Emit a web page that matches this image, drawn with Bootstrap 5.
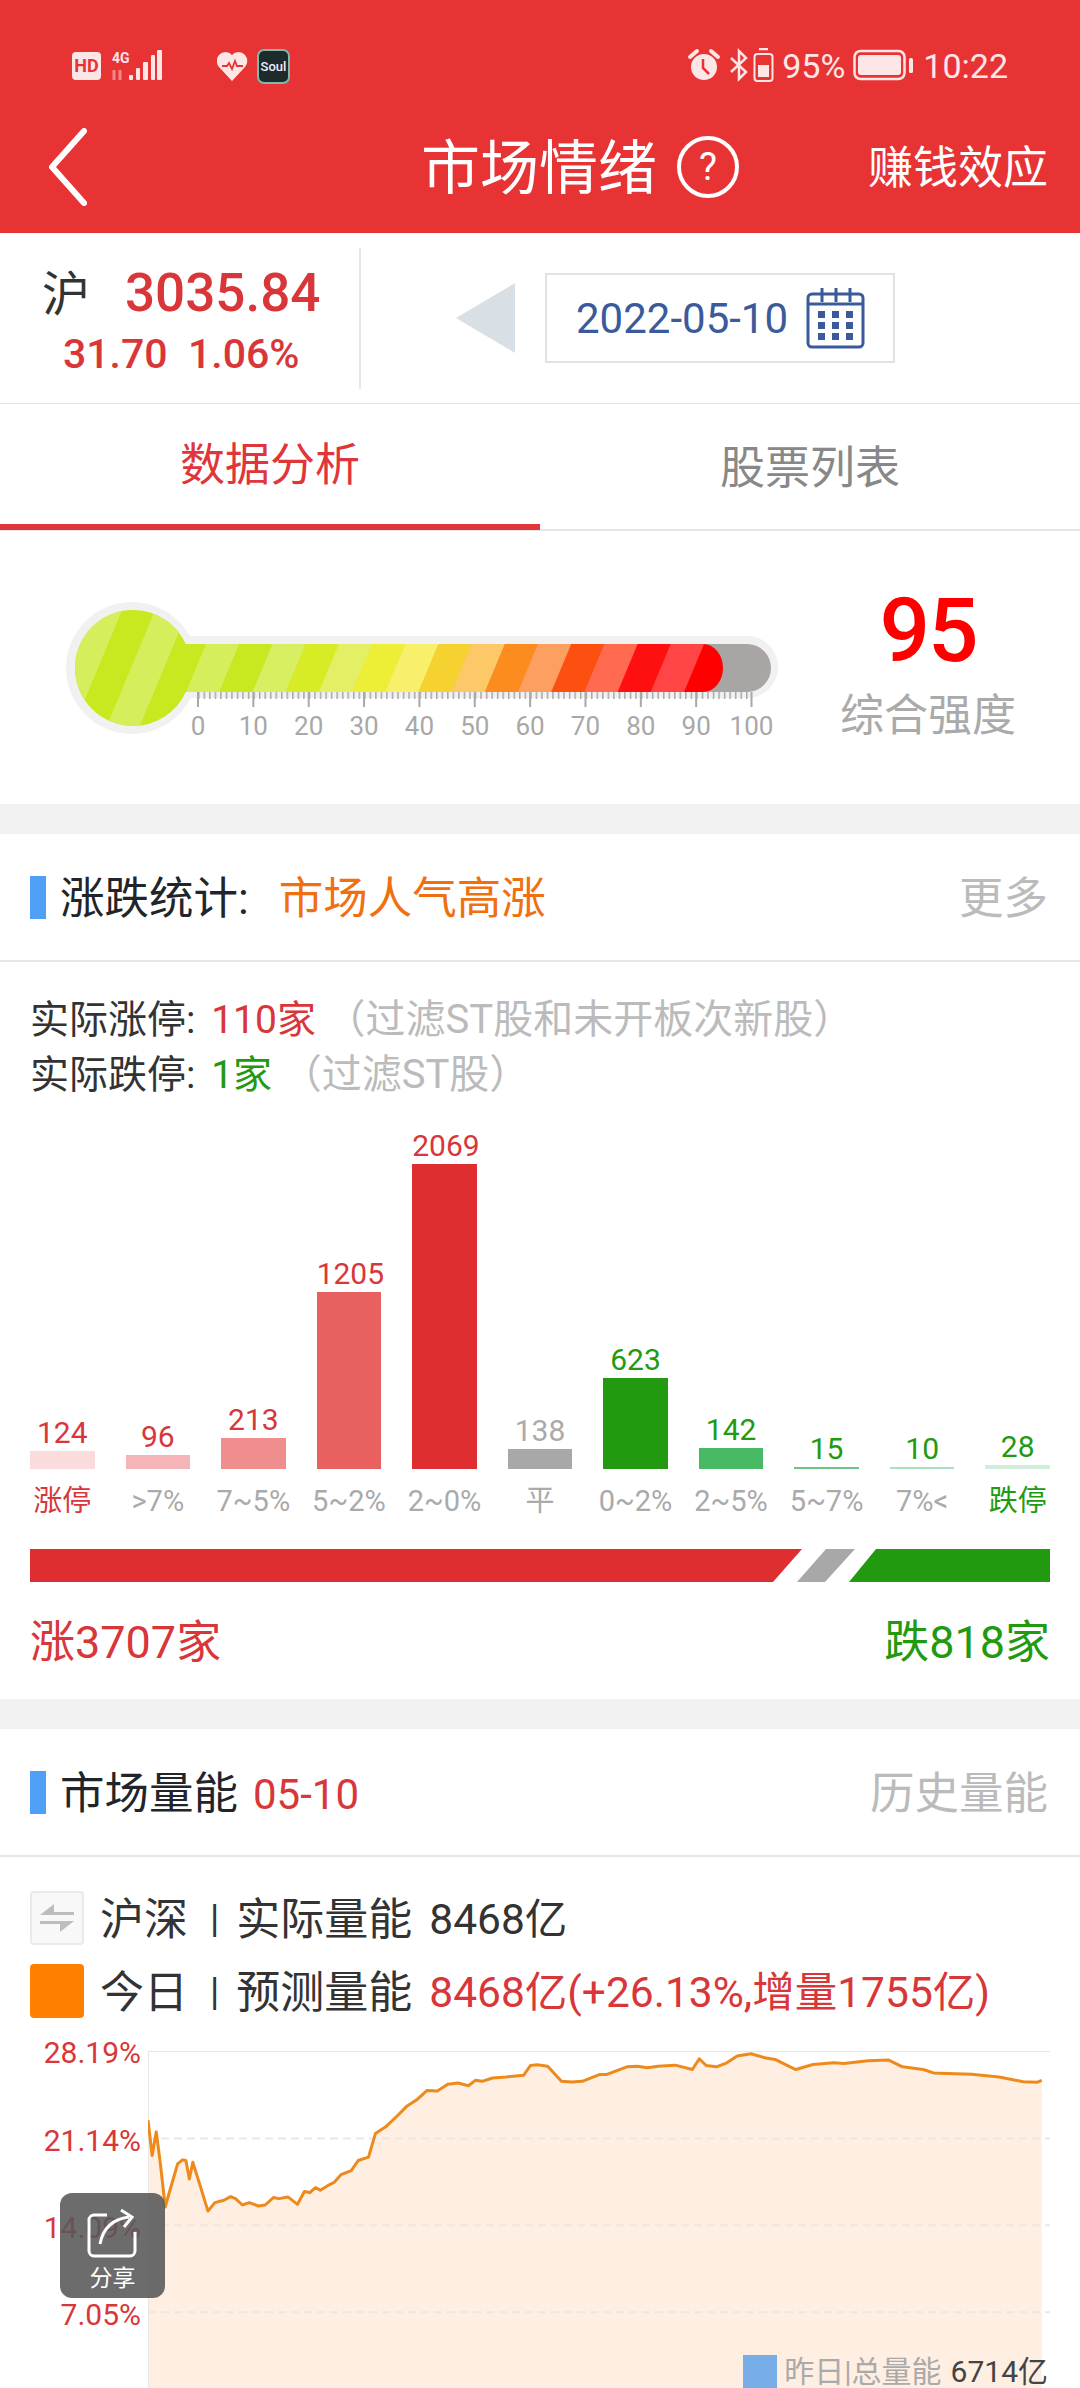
<!DOCTYPE html>
<html lang="zh-CN">
<head>
<meta charset="UTF-8">
<meta name="viewport" content="width=device-width, initial-scale=1.0">
<title>市场情绪</title>
<link href="https://cdn.jsdelivr.net/npm/bootstrap@5.3.0/dist/css/bootstrap.min.css" rel="stylesheet">
<style>
  html, body { margin: 0; }
  body {
    width: 1080px; height: 2388px; overflow: hidden; position: relative; background: #fff; color: #333;
    font-family: Roboto, "Noto Sans CJK SC", sans-serif;
  }
  .c-red { color: #d93639; }
  .c-green { color: #229a10; }
  .c-gray { color: #aaa; }
  .c-pale { color: #bbb; }

  .app-head { background: #e83335; color: #fff; height: 233px; }
  .status-bar { height: 100px; padding: 48px 72px 0; color: #fde6e6; }
  .status-apps { margin-left: 53px; }
  .status-txt { font-size: 34px; line-height: 36px; }
  .nav-bar { height: 133px; padding: 0 32px 0 48px; }
  .page-title { font-size: 59px; line-height: 70px; margin-left: 334px; margin-right: 20px; padding-top: 4px; }
  .head-link { font-size: 45px; line-height: 60px; padding-top: 4px; }

  .index-row { height: 170px; }
  .index-left { width: 361px; height: 141px; border-right: 2px solid #e8e8e8; padding-top: 13px; }
  .index-name { font-size: 48px; line-height: 60px; color: #333; margin-left: 42px; width: 83px; padding-top: 4px; }
  .index-price { font-size: 53px; line-height: 60px; font-weight: 500; }
  .index-chg { font-size: 41px; line-height: 50px; font-weight: 500; margin: 4px 0 0 63px; }
  .arrow-left { width: 0; height: 0; border-top: 35px solid transparent; border-bottom: 35px solid transparent; border-right: 59px solid #d8dfe5; margin: 0 30px 0 95px; }
  .date-box { width: 350px; height: 90px; border: 2px solid #e2e2e2; padding-left: 29px; color: #3a5a9c; font-size: 42px; }
  .cal-icon { margin-left: 18px; }

  .tab-row { height: 128px; border-bottom: 2px solid #e6e6e6; }
  .tab-item { height: 126px; font-size: 45px; color: #888; padding-top: 4px; }
  .tab-item.on { color: #e0353a; border-bottom: 6px solid #e0353a; }

  .thermo-wrap { height: 273px; }
  .thermo-side { width: 256px; text-align: center; }
  .thermo-num { font-size: 89px; line-height: 100px; font-weight: 500; color: #f00; margin-top: 50px; letter-spacing: -2px; }
  .thermo-lbl { font-size: 44px; line-height: 60px; color: #aaa; padding-top: 5px; }

  .band { height: 30px; background: #f2f2f2; }
  .sec-head { height: 128px; border-bottom: 2px solid #e6e6e6; padding: 0 32px 0 30px; font-size: 44.5px; }
  .sec-head > span:not(.sec-mark) { padding-top: 4px; }
  .sec-mark { width: 16px; height: 43px; background: #4e9ff5; margin-right: 14px; }
  .sec-orange { color: #f07010; margin-left: 30px; }
  .sec-date { font-size: 42px; margin-left: 15px; }

  .stat-body { padding: 30px 30px 26px; }
  .stat-line { font-size: 39px; line-height: 55px; height: 55px; color: #333; white-space: nowrap; }
  .stat-num { margin-left: 6px; }
  .stat-note { font-size: 40px; }
  .bars { margin-top: 26px; }
  .bar-col { width: 64.5px; }
  .bar-val { font-size: 30px; line-height: 36px; white-space: nowrap; text-align: center; }
  .bar-lbl { font-size: 29px; line-height: 64px; height: 64px; white-space: nowrap; text-align: center; margin: 0 -12px; }
  .ratio-bar { display: block; margin-top: 16px; }
  .totals { font-size: 45px; line-height: 60px; margin-top: 31px; }

  .legend-wrap { padding: 34px 30px 0; }
  .legend-row { height: 54px; margin-bottom: 19px; font-size: 44px; color: #333; white-space: nowrap; }
  .legend-row:last-child { margin-bottom: 0; }
  .legend-row > span:not(.legend-box) { padding-top: 3px; }
  .legend-box { width: 54px; height: 54px; border-radius: 4px; margin-right: 16px; }
  .legend-box.flat { background: #f8f8f8; border: 2px solid #eaeaea; }
  .legend-box.orange { background: #ff7f00; }
  .legend-sep { margin: 0 17px 0 22px; font-size: 38px; }
  .legend-val { margin-left: 17px; font-size: 42.5px; }

  .vol-chart { padding-left: 30px; }
  .y-axis { width: 111px; text-align: right; font-size: 30px; color: #d93639; }
  .y-axis div { line-height: 87px; height: 87px; }
  .y-axis div:first-child { line-height: 70px; height: 79px; }
  .plot { display: block; margin: 33px 0 0 7px; }
  .plot-legend { position: absolute; right: 32px; bottom: 0; height: 33px; font-size: 30px; line-height: 33px; color: #aaa; }
  .plot-legend i { display: block; width: 34px; height: 33px; background: #78aee8; margin-right: 7px; }
  .plot-legend b { font-weight: 400; color: #444; margin-left: 9px; }

  .share-btn { position: absolute; left: 60px; top: 2193px; width: 105px; height: 105px; border-radius: 12px; background: rgba(88,88,88,.88); color: #fff; font-size: 23px; line-height: 26px; padding-top: 15px; }
</style>
</head>
<body>

<div class="app-head">
  <div class="status-bar d-flex align-items-start">
    <svg width="92" height="34" viewBox="72 48 92 34">
      <rect x="72" y="52" width="29" height="28" rx="4" fill="#fde6e6"/>
      <text x="86.5" y="72" text-anchor="middle" font-size="18" font-weight="700" fill="#e83335" font-family="Roboto">HD</text>
      <text x="112" y="63" font-size="14" font-weight="700" fill="#fde6e6" font-family="Roboto">4G</text>
      <path d="M114 70v10M120 80v-10" stroke="#f08a8a" stroke-width="3" fill="none"/>
      <g fill="#fde6e6">
        <rect x="129" y="75" width="4" height="5" rx="1"/>
        <rect x="136" y="68" width="4" height="12" rx="1"/>
        <rect x="143" y="62" width="5" height="18" rx="1"/>
        <rect x="151" y="55" width="4" height="25" rx="1"/>
        <rect x="157" y="50" width="5" height="30" rx="1"/>
      </g>
    </svg>
    <svg width="73" height="36" viewBox="215 48 73 36" class="status-apps">
      <path d="M230 81l-13-14a9 9 0 0 1 0-12 8.500 8.500 0 0 1 13 0 8.500 8.500 0 0 1 13 0 9 9 0 0 1 0 12z" fill="#fde6e6"/>
      <path d="M220 66h5l2-3 3 6 3-8 2 5h6" fill="none" stroke="#e83335" stroke-width="1.800"/>
      <rect x="256" y="50" width="31" height="33" rx="6" fill="#1f2b2b" stroke="#7fb8ae" stroke-width="2"/>
      <text x="271.500" y="71" text-anchor="middle" font-size="13" font-weight="500" fill="#eef" font-family="Roboto">Soul</text>
    </svg>
    <div class="d-flex align-items-start ms-auto">
      <svg width="34" height="34" viewBox="0 0 34 34" class="me-1">
        <circle cx="17" cy="19" r="13" fill="#fde6e6"/>
        <path d="M3 9l7-6M31 9l-7-6" stroke="#fde6e6" stroke-width="4" stroke-linecap="round"/>
        <path d="M16 11v9l6 6" fill="none" stroke="#e83335" stroke-width="2.500"/>
      </svg>
      <svg width="20" height="34" viewBox="0 0 20 34" class="ms-1">
        <path d="M2 10l15 14-7 7V3l7 7L2 24" fill="none" stroke="#fde6e6" stroke-width="2.500"/>
      </svg>
      <svg width="21" height="34" viewBox="0 0 21 34" class="ms-1 me-2">
        <path d="M6 1h9" stroke="#fde6e6" stroke-width="2.500"/>
        <rect x="1.500" y="6" width="18" height="27" rx="3" fill="none" stroke="#fde6e6" stroke-width="2"/>
        <rect x="5" y="17" width="11" height="12" fill="#fde6e6"/>
      </svg>
      <span class="status-txt">95%</span>
      <svg width="62" height="34" viewBox="0 0 62 34" class="ms-2 me-2">
        <rect x="1.500" y="3" width="50" height="28" rx="6" fill="none" stroke="#fde6e6" stroke-width="2.500"/>
        <rect x="5" y="7" width="43" height="20" rx="3" fill="#fde6e6"/>
        <rect x="56" y="10" width="4" height="15" rx="1.500" fill="#fde6e6"/>
      </svg>
      <span class="status-txt">10:22</span>
    </div>
  </div>
  <div class="nav-bar d-flex align-items-center">
    <svg width="39" height="78" viewBox="0 0 39 78"><path d="M36 3L4 39l32 36" fill="none" stroke="#fff" stroke-width="6" stroke-linecap="round" stroke-linejoin="round"/></svg>
    <span class="page-title">市场情绪</span>
    <svg width="62" height="62" viewBox="0 0 62 62">
      <circle cx="31" cy="31" r="29" fill="none" stroke="#fff" stroke-width="4"/>
      <text x="31" y="44" text-anchor="middle" font-size="38" fill="#fff" font-family="Roboto">?</text>
    </svg>
    <span class="head-link ms-auto">赚钱效应</span>
  </div>
</div>

<div class="index-row d-flex align-items-center">
  <div class="index-left">
    <div class="d-flex align-items-center">
      <span class="index-name">沪</span>
      <span class="index-price c-red">3035.84</span>
    </div>
    <div class="index-chg c-red">31.70&nbsp; 1.06%</div>
  </div>
  <div class="arrow-left"></div>
  <div class="date-box d-flex align-items-center">
    <span>2022-05-10</span>
    <svg width="59" height="62" viewBox="0 0 59 62" class="cal-icon">
      <rect x="2" y="7" width="55" height="53" rx="4" fill="none" stroke="#3a5a9c" stroke-width="3"/>
      <path d="M2 17h55" stroke="#3a5a9c" stroke-width="3"/>
      <path d="M16 1v14M30 1v14M44 1v14" stroke="#3a5a9c" stroke-width="3"/>
      <g fill="#3a5a9c">
        <rect x="12" y="24" width="7" height="7"/><rect x="26" y="24" width="7" height="7"/><rect x="40" y="24" width="7" height="7"/>
        <rect x="12" y="35" width="7" height="7"/><rect x="26" y="35" width="7" height="7"/><rect x="40" y="35" width="7" height="7"/>
        <rect x="12" y="46" width="7" height="7"/><rect x="26" y="46" width="7" height="7"/><rect x="40" y="46" width="7" height="7"/>
      </g>
    </svg>
  </div>
</div>

<div class="row g-0 tab-row border-top">
  <div class="col-6 tab-item on d-flex align-items-center justify-content-center">数据分析</div>
  <div class="col-6 tab-item d-flex align-items-center justify-content-center">股票列表</div>
</div>

<div class="thermo-wrap d-flex">
  <svg width="800" height="273" viewBox="0 531 800 273">
    <defs>
      <clipPath id="fillClip">
        <circle cx="133" cy="668" r="58"/>
        <path d="M150 644H703a20 24 0 0 1 0 48H150z"/>
      </clipPath>
      <pattern id="minorTicks" x="198" y="692" width="5.535" height="7" patternUnits="userSpaceOnUse">
        <rect width="1.500" height="7" fill="#a8a8a8"/>
      </pattern>
    </defs>
    <circle cx="132" cy="668" r="66" fill="#f1f1f1"/>
    <rect x="150" y="636" width="628" height="62" rx="31" fill="#f1f1f1"/>
    <path d="M150 644H747a24 24 0 0 1 0 48H150z" fill="#a9a5a5"/>
    <g clip-path="url(#fillClip)">
      <rect x="60" y="600" width="150" height="140" fill="#c8e820"/>
      <g id="stripes"></g>
    </g>
    <rect x="198" y="692" width="554" height="7" fill="url(#minorTicks)"/>
    <g id="scale" font-size="26" fill="#a8a8a8" font-family="Roboto" text-anchor="middle"></g>
  </svg>
  <div class="thermo-side d-flex flex-column align-items-center">
    <div class="thermo-num">95</div>
    <div class="thermo-lbl">综合强度</div>
  </div>
</div>

<div class="band"></div>

<div class="sec-head d-flex align-items-center">
  <span class="sec-mark"></span>
  <span class="text-dark">涨跌统计:</span>
  <span class="sec-orange">市场人气高涨</span>
  <span class="c-pale ms-auto">更多</span>
</div>

<div class="stat-body">
  <div class="stat-line">实际涨停: <span class="c-red stat-num">110家</span> <span class="c-pale stat-note">（过滤ST股和未开板次新股）</span></div>
  <div class="stat-line">实际跌停: <span class="c-green stat-num">1家</span> <span class="c-pale stat-note">（过滤ST股）</span></div>

  <div class="bars d-flex justify-content-between align-items-end">
    <div class="bar-col"><div class="bar-val c-red">124</div><div style="height:18px;background:#fadcdc"></div><div class="bar-lbl c-red">涨停</div></div>
    <div class="bar-col"><div class="bar-val c-red">96</div><div style="height:14px;background:#f5b5b8"></div><div class="bar-lbl c-gray">&gt;7%</div></div>
    <div class="bar-col"><div class="bar-val c-red">213</div><div style="height:31px;background:#f08d8d"></div><div class="bar-lbl c-gray">7~5%</div></div>
    <div class="bar-col"><div class="bar-val c-red">1205</div><div style="height:177px;background:#e96060"></div><div class="bar-lbl c-gray">5~2%</div></div>
    <div class="bar-col"><div class="bar-val c-red">2069</div><div style="height:305px;background:#df2e30"></div><div class="bar-lbl c-gray">2~0%</div></div>
    <div class="bar-col"><div class="bar-val c-gray">138</div><div style="height:20px;background:#a8a8a8"></div><div class="bar-lbl c-gray">平</div></div>
    <div class="bar-col"><div class="bar-val c-green">623</div><div style="height:91px;background:#229a10"></div><div class="bar-lbl c-gray">0~2%</div></div>
    <div class="bar-col"><div class="bar-val c-green">142</div><div style="height:21px;background:#48b964"></div><div class="bar-lbl c-gray">2~5%</div></div>
    <div class="bar-col"><div class="bar-val c-green">15</div><div style="height:2px;background:#6cc48a"></div><div class="bar-lbl c-gray">5~7%</div></div>
    <div class="bar-col"><div class="bar-val c-green">10</div><div style="height:2px;background:#a8dfc0"></div><div class="bar-lbl c-gray">7%&lt;</div></div>
    <div class="bar-col"><div class="bar-val c-green">28</div><div style="height:4px;background:#cfeeda"></div><div class="bar-lbl c-green">跌停</div></div>
  </div>

  <svg class="ratio-bar" width="1020" height="33" viewBox="0 0 1020 33">
    <polygon points="0,0 772,0 743,33 0,33" fill="#df2e30"/>
    <polygon points="796,0 825,0 795,33 767,33" fill="#a8a8a8"/>
    <polygon points="846,0 1020,0 1020,33 819,33" fill="#229a10"/>
  </svg>

  <div class="totals d-flex justify-content-between">
    <span class="c-red">涨3707家</span>
    <span class="c-green">跌818家</span>
  </div>
</div>

<div class="band"></div>

<div class="sec-head d-flex align-items-center">
  <span class="sec-mark"></span>
  <span class="text-dark">市场量能</span>
  <span class="c-red sec-date">05-10</span>
  <span class="c-pale ms-auto">历史量能</span>
</div>

<div class="legend-wrap">
  <div class="legend-row d-flex align-items-center">
    <span class="legend-box flat d-flex align-items-center justify-content-center">
      <svg width="38" height="32" viewBox="0 0 38 32"><path d="M2 13L16 2v8h20v3zM36 19L22 30v-8H2v-3z" fill="#bdbdbd"/></svg>
    </span>
    <span>沪深</span><span class="legend-sep">|</span><span>实际量能</span><span class="legend-val">8468亿</span>
  </div>
  <div class="legend-row d-flex align-items-center">
    <span class="legend-box orange"></span>
    <span>今日</span><span class="legend-sep">|</span><span>预测量能</span><span class="legend-val c-red">8468亿(+26.13%,增量1755亿)</span>
  </div>
</div>

<div class="vol-chart d-flex">
  <div class="y-axis">
    <div>28.19%</div>
    <div>21.14%</div>
    <div>14.09%</div>
    <div>7.05%</div>
  </div>
  <!-- viewBox is the picture's own chart box, scaled -->
  <svg class="plot" width="902" height="338" viewBox="215 565 1309 1003" preserveAspectRatio="none">
    <path id="volArea" fill="#feefe2" d=""/>
    <path d="M215 565H1524" stroke="#e8e8e8" stroke-width="2" vector-effect="non-scaling-stroke"/>
    <path d="M215 565V1568" stroke="#e8e8e8" stroke-width="2" vector-effect="non-scaling-stroke"/>
    <path d="M215 825H1524M215 1082H1524M215 1340H1524" stroke="#efe6de" stroke-width="2" stroke-dasharray="8 5" vector-effect="non-scaling-stroke"/>
    <polyline id="volLine" fill="none" stroke="#ee8a1c" stroke-width="3" stroke-linejoin="round" vector-effect="non-scaling-stroke" points=""/>
  </svg>
</div>

<div class="plot-legend d-flex align-items-center">
  <i></i><span>昨日|总量能</span><b>6714亿</b>
</div>

<div class="share-btn d-flex flex-column align-items-center">
  <svg width="52" height="50" viewBox="0 0 52 50">
    <path d="M20 7H7a5 5 0 0 0-5 5v31a5 5 0 0 0 5 5h36a5 5 0 0 0 5-5V24" fill="none" stroke="#fff" stroke-width="3"/>
    <path d="M13 36C16 20 26 11 42 9" fill="none" stroke="#fff" stroke-width="3"/>
    <path d="M34 2l11 7-8 10" fill="none" stroke="#fff" stroke-width="3"/>
  </svg>
  <span class="mt-2">分享</span>
</div>

<script>
  // thermometer stripes and scale
  const bands = ['#d5ee5c','#c8e820','#d8ef62','#d8ec25','#e3f066','#ecef35','#f8f06a','#f5d230','#fdc868','#fd8c1e','#fd9f60','#fd4f10','#ff6a50','#ff1010','#ff4545','#ff0000'];
  let html = '';
  bands.forEach((c, i) => {
    const x = 186 + i * 33.2;
    const w = i == bands.length - 1 ? 60 : 33.6;
    html += `<polygon fill="${c}" points="${x + 20},644 ${x + w + 20},644 ${x + w},692 ${x},692"/>`;
  });
  [[40, 73], [106, 139]].forEach(s => {
    html += `<polygon fill="#d5ee5c" points="${s[0] + 50},608 ${s[1] + 50},608 ${s[1]},728 ${s[0]},728"/>`;
  });
  document.getElementById('stripes').innerHTML = html;

  let scale = '';
  for (let i = 0; i <= 10; i++) {
    const x = 198 + i * 55.35;
    scale += `<rect x="${x - 1}" y="692" width="2" height="15"/><text x="${x}" y="735">${i * 10}</text>`;
  }
  document.getElementById('scale').innerHTML = scale;

  // today's volume line
  const pts = '215,770 221,875 227,805 233,900 240,1028 248,970 258,900 265,888 270,890 275,945 280,895 290,960 302,1040 312,1015 325,1008 335,997 342,1003 352,1022 362,1015 375,1025 385,1022 397,1000 405,1003 418,998 432,1020 442,982 450,985 458,970 465,978 478,962 485,955 495,932 510,920 520,890 535,880 545,810 560,790 578,755 590,730 605,710 620,682 635,684 650,664 665,660 680,668 690,652 700,655 715,645 735,642 760,637 770,608 780,606 795,610 815,655 830,657 845,655 870,635 880,635 910,612 925,610 940,615 955,610 980,607 1005,620 1015,588 1025,608 1040,612 1055,600 1070,580 1090,573 1110,585 1125,590 1155,620 1180,605 1210,600 1225,602 1260,594 1290,592 1310,612 1340,620 1355,630 1375,632 1410,634 1450,642 1485,656 1505,658 1512,652';
  document.getElementById('volLine').setAttribute('points', pts);
  document.getElementById('volArea').setAttribute('d', 'M' + pts.replace(/ /g, ' L') + ' L1512,1568 L215,1568 Z');
</script>
<script src="https://cdn.jsdelivr.net/npm/bootstrap@5.3.0/dist/js/bootstrap.bundle.min.js"></script>
</body>
</html>
